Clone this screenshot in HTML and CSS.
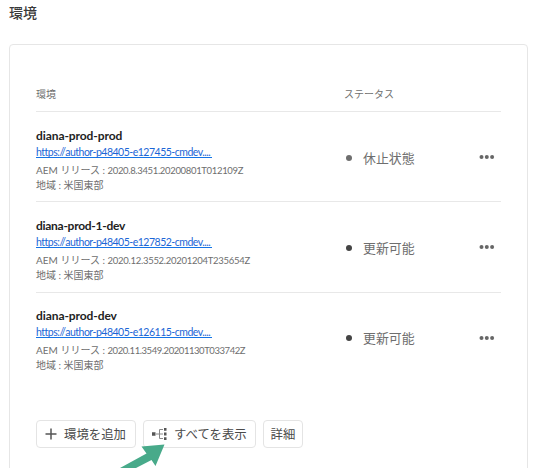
FILE: index.html
```
<!DOCTYPE html>
<html lang="ja">
<head>
<meta charset="utf-8">
<title>環境</title>
<link rel="stylesheet" href="styles.css">
</head>
<body>
<h1 class="title">環境</h1>
<section class="card">
  <div class="row head"><span>環境</span><span class="head-status">ステータス</span></div>
  <div class="row env">
    <div class="info">
      <h2 class="name">diana-prod-prod</h2>
      <a class="link"><span class="url">https://author-p48405-e127455-cmdev....</span></a>
      <p class="meta">AEM <span class="kana">リリース</span> : <span class="version v1">2020.8.3451.20200801T012109Z</span></p>
      <p class="meta">地域 : 米国東部</p>
    </div>
    <div class="status idle"><i class="dot"></i>休止状態</div>
    <svg class="more" viewBox="0 0 16 6"><circle cx="2.5" cy="3" r="2"/><circle cx="7.8" cy="3" r="2"/><circle cx="13.1" cy="3" r="2"/></svg>
  </div>
  <div class="row env">
    <div class="info">
      <h2 class="name tight">diana-prod-1-dev</h2>
      <a class="link"><span class="url">https://author-p48405-e127852-cmdev....</span></a>
      <p class="meta">AEM <span class="kana">リリース</span> : <span class="version v2">2020.12.3552.20201204T235654Z</span></p>
      <p class="meta">地域 : 米国東部</p>
    </div>
    <div class="status"><i class="dot"></i>更新可能</div>
    <svg class="more" viewBox="0 0 16 6"><circle cx="2.5" cy="3" r="2"/><circle cx="7.8" cy="3" r="2"/><circle cx="13.1" cy="3" r="2"/></svg>
  </div>
  <div class="row env">
    <div class="info">
      <h2 class="name">diana-prod-dev</h2>
      <a class="link"><span class="url">https://author-p48405-e126115-cmdev....</span></a>
      <p class="meta">AEM <span class="kana">リリース</span> : <span class="version v3">2020.11.3549.20201130T033742Z</span></p>
      <p class="meta">地域 : 米国東部</p>
    </div>
    <div class="status"><i class="dot"></i>更新可能</div>
    <svg class="more" viewBox="0 0 16 6"><circle cx="2.5" cy="3" r="2"/><circle cx="7.8" cy="3" r="2"/><circle cx="13.1" cy="3" r="2"/></svg>
  </div>
  <div class="actions">
    <button class="btn add"><svg class="plus" viewBox="0 0 12 12"><path d="M6 .5v11M.5 6h11"/></svg>環境を追加</button>
    <button class="btn all"><svg class="tree" viewBox="0 0 16 12"><path class="wire" d="M4 6h4M11 1.500H7.500v9H11M7.500 6H11"/><path d="M0 4.200h3.500v3.500H0zM12 0h2.500v2.800H12zM12 4.600h2.500v2.800H12zM12 9.200h2.500V12H12z"/></svg>すべてを表示</button>
    <button class="btn detail">詳細</button>
  </div>
</section>
<svg class="arrow" viewBox="0 0 50 25"><path d="M44.500 1.500 21.500 3.500l5 7L0 25h16l15.500-8 4 6z"/></svg>
</body>
</html>
```
FILE: styles.css
```
* { box-sizing: border-box; }
body {
  margin: 0;
  width: 533px;
  height: 468px;
  overflow: hidden;
  position: relative;
  background: #fff;
  color: #6e6e6e;
  font-family: "Noto Sans CJK JP", "Noto Sans", sans-serif;
}
h1, h2, p { margin: 0; }
.title {
  height: 44px;
  padding: 2px 0 0 9px;
  font-size: 14px;
  line-height: 20px;
  font-weight: 500;
  color: #3a3a3a;
}
.card {
  margin-left: 9px;
  width: 519px;
  height: 440px;
  padding: 36px 26px 0;
  border: 1px solid #e6e6e6;
  border-radius: 4px;
}
.row {
  display: grid;
  grid-template-columns: 308px 1fr 21px;
  border-bottom: 1px solid #e8e8e8;
  white-space: nowrap;
}
.head { height: 31px; font-size: 10px; line-height: 26px; }
.env { height: 90.3px; }
.env:nth-child(4) { border-bottom: 0; }
.info { padding-top: 14.500px; }
.name {
  font-family: Lato, "Noto Sans CJK JP", sans-serif;
  font-size: 12px;
  line-height: 17px;
  font-weight: 700;
  letter-spacing: -.08px;
  color: #222;
}
.tight { letter-spacing: -.28px; }
.link {
  display: block;
  width: 176px;
  height: 14px;
  margin-bottom: 5px;
  border-bottom: 1px solid #1473e6;
  font-family: Lato, "Noto Sans CJK JP", sans-serif;
  font-size: 10.500px;
  line-height: 16px;
  letter-spacing: -.49px;
  color: #1b66d6;
}
.meta {
  font-family: Lato, "Noto Sans CJK JP", sans-serif;
  font-size: 10px;
  line-height: 14px;
}
.version { font-size: 9.500px; }
.v1 { letter-spacing: -.33px; }
.v2 { letter-spacing: -.27px; }
.v3 { letter-spacing: -.44px; }
.status {
  display: flex;
  align-items: center;
  height: 90px;
  padding-left: 2px;
  font-size: 12.900px;
  color: #6e6e6e;
}
.dot {
  width: 6px;
  height: 6px;
  margin: 1px 11px 0 0;
  border-radius: 50%;
  background: #444;
}
.idle .dot { background: #6e6e6e; }
.more { width: 16px; height: 6px; margin-top: 42px; margin-left: -1px; fill: #666; }
.actions { display: flex; gap: 7px; padding-top: 37.300px; }
.btn {
  display: flex;
  align-items: center;
  height: 28px;
  padding: 0 0 1px;
  border: 1px solid #e4e4e4;
  border-radius: 4px;
  background: #fff;
  font-family: inherit;
  font-size: 12.400px;
  color: #4b4b4b;
  white-space: nowrap;
}
.add { width: 100px; padding-left: 8px; }
.all { width: 113px; padding-left: 8px; }
.detail { width: 40px; justify-content: center; }
.plus { width: 12px; height: 12px; margin-right: 7px; stroke: #555; stroke-width: 1.500; }
.tree { width: 16px; height: 12px; margin-right: 6px; fill: #555; }
.wire { fill: none; stroke: #888; }
.arrow { position: absolute; left: 120px; top: 443px; width: 50px; height: 25px; fill: #48aa8a; }
```
